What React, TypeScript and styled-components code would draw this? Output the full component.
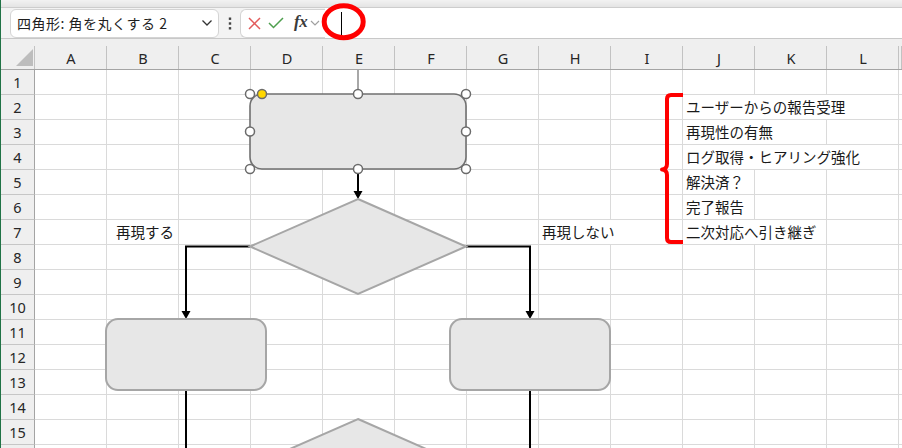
import React from 'react';
import styled, { createGlobalStyle } from 'styled-components';

const GlobalStyle = createGlobalStyle`
  html, body {
    margin: 0;
    padding: 0;
    background: #fff;
    overflow: hidden;
  }
  body {
    font-family: 'Noto Sans', 'Noto Sans CJK JP', sans-serif;
  }
`;

const Window = styled.div`
  position: relative;
  width: 902px;
  height: 448px;
  overflow: hidden;
  box-sizing: border-box;
  padding-left: 1px;
  background: linear-gradient(#217346, #217346) left top / 1px 100% no-repeat, #fff;
`;

const TopStrip = styled.div`
  height: 7px;
  background: linear-gradient(#f2f2f2, #e4e4e4);
  border-bottom: 1px solid #cdcdcd;
`;

const FormulaBar = styled.div`
  display: flex;
  align-items: center;
  height: 30px;
  padding-left: 9px;
  background: #f3f3f3;
  border-bottom: 1px solid #c8c8c8;
`;

const NameBox = styled.div`
  box-sizing: border-box;
  width: 209px;
  height: 29px;
  display: flex;
  align-items: center;
  justify-content: space-between;
  padding: 0 5px 0 6px;
  background: #fff;
  border: 1px solid #d4d4d4;
  border-radius: 6px;
  font-family: 'Noto Sans CJK JP', sans-serif;
  font-size: 14px;
  letter-spacing: 0.5px;
  color: #1f1f1f;
`;

const Grip = styled.div`
  width: 21px;
  display: flex;
  justify-content: center;
`;

const FxButtons = styled.div`
  box-sizing: border-box;
  width: 85px;
  height: 29px;
  display: flex;
  align-items: center;
  padding-left: 6px;
  background: #fff;
  border: 1px solid #d4d4d4;
  border-right: none;
  border-radius: 6px 0 0 6px;
`;

const IconSlot = styled.span<{ $w: number }>`
  width: ${(p) => p.$w}px;
  display: flex;
  align-items: center;
  justify-content: center;
`;

const FxLabel = styled.span`
  font-family: 'Liberation Serif', serif;
  font-style: italic;
  font-weight: bold;
  font-size: 17px;
  color: #3a3a3a;
  letter-spacing: -0.5px;
  margin: 0 3px 2px 3px;
`;

const FormulaInput = styled.div`
  flex: 1;
  align-self: stretch;
  display: flex;
  align-items: center;
  padding-left: 16px;
  background: #fff;
`;

const Caret = styled.div`
  width: 1px;
  height: 23px;
  background: #000;
`;

const HeaderRow = styled.div`
  display: grid;
  grid-template-columns: 34px repeat(12, 72px) 1fr;
  height: 30px;
  border-bottom: 1px solid #a4a4a4;
  background: #efefef;
`;

const Corner = styled.div`
  display: flex;
  align-items: flex-end;
  justify-content: flex-end;
  padding: 0 2px 3px 0;
  background: linear-gradient(#c2c2c2, #c2c2c2) right bottom / 1px 23px no-repeat;
`;

const ColHead = styled.div`
  display: flex;
  align-items: center;
  justify-content: center;
  padding-top: 7px;
  font-size: 14.5px;
  color: #262626;
  background: linear-gradient(#c2c2c2, #c2c2c2) right bottom / 1px 23px no-repeat;
`;

const Row = styled.div`
  display: grid;
  grid-template-columns: 34px repeat(12, 72px) 1fr;
  height: 25px;
`;

const RowHead = styled.div`
  box-sizing: border-box;
  display: flex;
  align-items: center;
  justify-content: center;
  background: #efefef;
  border-right: 1px solid #a4a4a4;
  border-bottom: 1px solid #c6c6c6;
  font-size: 14.5px;
  color: #262626;
`;

const Cell = styled.div<{ $indent?: number }>`
  box-sizing: border-box;
  display: flex;
  align-items: stretch;
  padding-left: ${(p) => p.$indent ?? 3}px;
  border-right: 1px solid #dadada;
  border-bottom: 1px solid #dadada;
  white-space: nowrap;
`;

const CellText = styled.span`
  position: relative;
  z-index: 1;
  background: #fff;
  line-height: 24px;
  padding-right: 2px;
  font-family: 'Noto Sans CJK JP', sans-serif;
  font-size: 14.5px;
  color: #1a1a1a;
`;

const Overlay = styled.svg`
  position: absolute;
  left: 0;
  top: 0;
  z-index: 2;
  pointer-events: none;
`;

const COLUMNS = ['A', 'B', 'C', 'D', 'E', 'F', 'G', 'H', 'I', 'J', 'K', 'L', ''];

type CellEntry = { text: string; indent?: number };

const CELLS: Record<string, CellEntry> = {
  'J2': { text: 'ユーザーからの報告受理' },
  'J3': { text: '再現性の有無' },
  'J4': { text: 'ログ取得・ヒアリング強化' },
  'J5': { text: '解決済？' },
  'J6': { text: '完了報告' },
  'J7': { text: '二次対応へ引き継ぎ' },
  'B7': { text: '再現する', indent: 9 },
  'H7': { text: '再現しない', indent: 3 },
};

// row 16 only peeks in at the bottom edge; its number sits below the fold
const ROWS = Array.from({ length: 16 }, (_, i) => i + 1);

const SHAPE_FILL = '#e7e7e7';
const SHAPE_LINE = '#a6a6a6';

const Handle = ({ x, y, fill = '#fff' }: { x: number; y: number; fill?: string }) => (
  <circle cx={x} cy={y} r={4.5} fill={fill} stroke="#6b6b6b" strokeWidth={1.5} />
);

const ArrowHead = ({ x, y }: { x: number; y: number }) => (
  <polygon points={`${x - 4.5},${y - 8} ${x + 4.5},${y - 8} ${x},${y}`} fill="#000" />
);

const Diamond = ({ cx, top }: { cx: number; top: number }) => (
  <polygon
    points={`${cx},${top} ${cx + 108},${top + 47.5} ${cx},${top + 95} ${cx - 108},${top + 47.5}`}
    fill={SHAPE_FILL}
    stroke={SHAPE_LINE}
    strokeWidth={2}
  />
);

const Drawing = () => (
  <Overlay width={902} height={448} viewBox="0 0 902 448">
    {/* formula bar call-out */}
    <ellipse cx={343.7} cy={21.7} rx={19.5} ry={16} fill="none" stroke="#ff0000" strokeWidth={5} />

    {/* connectors */}
    <line x1={358} y1={70} x2={358} y2={90} stroke="#6e6e6e" strokeWidth={1.2} />
    <line x1={358} y1={173} x2={358} y2={192} stroke="#000" strokeWidth={2} />
    <ArrowHead x={358} y={199} />
    <polyline points="250,246.5 186,246.5 186,312" fill="none" stroke="#000" strokeWidth={2} />
    <ArrowHead x={186} y={319} />
    <polyline points="466,246.5 530,246.5 530,312" fill="none" stroke="#000" strokeWidth={2} />
    <ArrowHead x={530} y={319} />
    <line x1={186} y1={390} x2={186} y2={448} stroke="#000" strokeWidth={2} />
    <line x1={530} y1={390} x2={530} y2={448} stroke="#000" strokeWidth={2} />

    {/* shapes */}
    <Diamond cx={358} top={199} />
    <Diamond cx={358} top={419} />
    <rect x={106} y={319} width={160} height={71} rx={12} fill={SHAPE_FILL} stroke={SHAPE_LINE} strokeWidth={2} />
    <rect x={450} y={319} width={160} height={71} rx={12} fill={SHAPE_FILL} stroke={SHAPE_LINE} strokeWidth={2} />

    {/* selected rounded rectangle */}
    <rect x={250} y={94} width={216} height={75} rx={12} fill={SHAPE_FILL} stroke="#707070" strokeWidth={1.6} />
    <Handle x={250} y={94} />
    <Handle x={358} y={94} />
    <Handle x={466} y={94} />
    <Handle x={250} y={131.5} />
    <Handle x={466} y={131.5} />
    <Handle x={250} y={169} />
    <Handle x={358} y={169} />
    <Handle x={466} y={169} />
    <Handle x={262} y={94} fill="#ffd700" />

    {/* brace */}
    <path
      d="M683,95 H671 Q667,95 667,99 V164 Q667,169 662,169.5 Q667,170 667,175 V238 Q667,242 671,242 H683"
      fill="none"
      stroke="#ff0000"
      strokeWidth={4}
      strokeLinejoin="round"
    />
  </Overlay>
);

const App = () => {
  return (
    <Window>
      <GlobalStyle />
      <TopStrip />
      <FormulaBar>
        <NameBox>
          <span>四角形: 角を丸くする 2</span>
          <svg width="12" height="8" viewBox="0 0 12 8">
            <path d="M1.5,1.5 L6,6 L10.5,1.5" fill="none" stroke="#333" strokeWidth={1.3} />
          </svg>
        </NameBox>
        <Grip>
          <svg width="4" height="13" viewBox="0 0 4 13">
            <rect x="0.8" y="0.5" width="2.4" height="2.4" fill="#444" />
            <rect x="0.8" y="5.3" width="2.4" height="2.4" fill="#444" />
            <rect x="0.8" y="10.1" width="2.4" height="2.4" fill="#444" />
          </svg>
        </Grip>
        <FxButtons>
          <IconSlot $w={14}>
            <svg width="13" height="13" viewBox="0 0 13 13">
              <path d="M1,1 L12,12 M12,1 L1,12" stroke="#e25b5b" strokeWidth={1.5} />
            </svg>
          </IconSlot>
          <IconSlot $w={30}>
            <svg width="16" height="12" viewBox="0 0 16 12">
              <path d="M1,6 L5.5,10.5 L15,1" fill="none" stroke="#4e9f4e" strokeWidth={1.5} />
            </svg>
          </IconSlot>
          <FxLabel>fx</FxLabel>
          <svg width="10" height="6" viewBox="0 0 10 6">
            <path d="M1,1 L5,5 L9,1" fill="none" stroke="#a0a0a0" strokeWidth={1.2} />
          </svg>
        </FxButtons>
        <FormulaInput>
          <Caret />
        </FormulaInput>
      </FormulaBar>

      <HeaderRow>
        <Corner>
          <svg width="17" height="17" viewBox="0 0 17 17">
            <polygon points="17,0 17,17 0,17" fill="#bdbdbd" />
          </svg>
        </Corner>
        {COLUMNS.map((c, i) => (
          <ColHead key={i}>{c}</ColHead>
        ))}
      </HeaderRow>

      {ROWS.map((r) => (
        <Row key={r}>
          <RowHead>{r < 16 ? r : ''}</RowHead>
          {COLUMNS.map((c, i) => {
            const entry = CELLS[`${c}${r}`];
            return (
              <Cell key={i} $indent={entry?.indent}>
                {entry && <CellText>{entry.text}</CellText>}
              </Cell>
            );
          })}
        </Row>
      ))}

      <Drawing />
    </Window>
  );
};

export default App;
